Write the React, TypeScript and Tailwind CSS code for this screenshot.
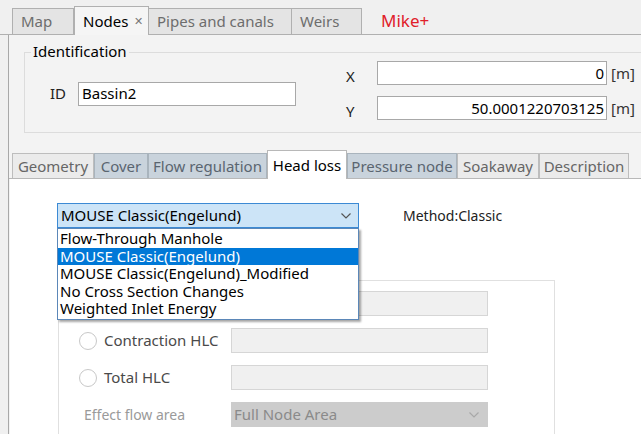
import React from 'react';

const font = { fontFamily: '"Segoe UI", "Noto Sans", "Open Sans", sans-serif' };

const TopTab: React.FC<{ label: string; active?: boolean; close?: boolean; w: string }> = ({ label, active, close, w }) => (
  <div
    className={
      active
        ? `${w} h-[29px] -mb-px flex items-center pl-[8px] bg-[#f5f5f5] border border-b-0 border-[#b0b0b0] text-black`
        : `${w} h-[26px] flex items-center pl-[8px] bg-[#e4e4e4] border border-b-0 border-l-0 first:border-l border-[#b0b0b0] text-[#6d6d6d]`
    }
  >
    <span>{label}</span>
    {close && <span className="ml-auto mr-[5px] text-[11px] text-[#777]">✕</span>}
  </div>
);

const SubTab: React.FC<{ label: string; tone: 'light' | 'blue' | 'active'; w: string }> = ({ label, tone, w }) => {
  const cls =
    tone === 'active'
      ? 'h-[29px] -mb-px bg-white text-black border-[#b8b8b8] border-b-0'
      : tone === 'blue'
      ? 'h-[25px] bg-[#c9d3dc] text-[#5a6570] border-[#a9b4bd]'
      : 'h-[25px] bg-[#ebebeb] text-[#666] border-[#bdbdbd]';
  return (
    <div className={`${w} ${cls} border border-b-0 flex items-center justify-center`}>
      {label}
    </div>
  );
};

const Radio: React.FC<{ label: string }> = ({ label }) => (
  <div className="flex items-center gap-[7px] w-[152px]">
    <span className="w-[18px] h-[18px] rounded-full border border-[#c8c8c8] bg-white" />
    {label && <span className="text-[#4a4a4a]">{label}</span>}
  </div>
);

export default function App() {
  return (
    <div className="w-[641px] h-[434px] overflow-hidden bg-[#f0f0f0] text-[15px] relative" style={font}>
      {/* top tab strip */}
      <div className="h-[35px] flex items-end pl-[12px] border-b border-[#b0b0b0]">
        <TopTab label="Map" w="w-[62px]" />
        <TopTab label="Nodes" active close w="w-[75px]" />
        <TopTab label="Pipes and canals" w="w-[143px]" />
        <TopTab label="Weirs" w="w-[70px]" />
        <span className="ml-[19px] mb-[1px] text-[#e0202a] text-[17px]">Mike+</span>
      </div>

      {/* main panel */}
      <div className="ml-[8px] h-[399px] border-l border-[#a8a8a8] bg-[#f3f3f3] flex flex-col">
        {/* identification group */}
        <div className="shrink-0 mt-[17px] ml-[15px] w-[640px] h-[81px] border border-[#dcdcdc] relative">
          <span className="absolute -top-[12px] left-[6px] px-[2px] bg-[#f3f3f3] text-black leading-[20px]">Identification</span>
          <div className="flex h-full">
            <div className="flex items-center pl-[25px] pt-[2px]">
              <span className="w-[28px] text-[#222]">ID</span>
              <div className="w-[218px] h-[24px] border border-[#a8a8a8] bg-white flex items-center pl-[3px] text-black">Bassin2</div>
            </div>
            <div className="ml-[50px] flex flex-col pt-[8px] gap-[11px]">
              <div className="flex items-center h-[24px]">
                <span className="w-[31px] mt-[6px] text-[#222]">X</span>
                <div className="w-[230px] h-[24px] border border-[#a8a8a8] bg-white flex items-center justify-end pr-[2px] text-black">0</div>
                <span className="ml-[4px] text-[#333]">[m]</span>
              </div>
              <div className="flex items-center h-[24px]">
                <span className="w-[31px] mt-[6px] text-[#222]">Y</span>
                <div className="w-[230px] h-[24px] border border-[#a8a8a8] bg-white flex items-center justify-end pr-[2px] text-black">50.0001220703125</div>
                <span className="ml-[4px] text-[#333]">[m]</span>
              </div>
            </div>
          </div>
        </div>

        {/* sub tabs */}
        <div className="shrink-0 mt-[20px] flex items-end pl-[3px] border-b border-[#b8b8b8] h-[26px]">
          <SubTab label="Geometry" tone="light" w="w-[82px]" />
          <SubTab label="Cover" tone="blue" w="w-[54px]" />
          <SubTab label="Flow regulation" tone="blue" w="w-[119px]" />
          <SubTab label="Head loss" tone="active" w="w-[80px]" />
          <SubTab label="Pressure node" tone="blue" w="w-[110px]" />
          <SubTab label="Soakaway" tone="light" w="w-[82px]" />
          <SubTab label="Description" tone="light" w="w-[90px]" />
        </div>

        {/* tab content */}
        <div className="flex-1 min-h-0 overflow-hidden bg-white ml-[1px] relative">
          <div className="flex items-center mt-[24px] ml-[47px]">
            <div className="w-[302px] h-[25px] bg-[#cce4f7] border border-[#3c8ad4] flex items-center justify-between pl-[3px] pr-[6px] text-black">
              <span>MOUSE Classic(Engelund)</span>
              <svg width="12" height="8" viewBox="0 0 12 8" fill="none" stroke="#555" strokeWidth="1.2">
                <path d="M1.5 1.5 L6 6 L10.5 1.5" />
              </svg>
            </div>
            <span className="ml-[44px] text-[#222] text-[14px]">Method:Classic</span>
          </div>

          {/* dropdown list */}
          <div className="absolute left-[47px] top-[49px] w-[302px] bg-white border border-[#5b87b8] shadow-[2px_2px_2px_rgba(0,0,0,0.35)] z-10 text-black leading-[17.5px] py-[1px]">
            <div className="pl-[2px]">Flow-Through Manhole</div>
            <div className="pl-[2px] bg-[#0078d7] text-white">MOUSE Classic(Engelund)</div>
            <div className="pl-[2px]">MOUSE Classic(Engelund)_Modified</div>
            <div className="pl-[2px]">No Cross Section Changes</div>
            <div className="pl-[2px]">Weighted Inlet Energy</div>
          </div>

          {/* coefficient group */}
          <div className="mt-[52px] ml-[48px] w-[497px] h-[200px] border border-[#e0e0e0] pl-[20px] pt-[10px] flex flex-col gap-[12px]">
            <div className="flex items-center h-[25px]">
              <Radio label="" />
              <div className="w-[257px] h-[25px] bg-[#f0f0f0] border border-[#d6d6d6]" />
            </div>
            <div className="flex items-center h-[25px]">
              <Radio label="Contraction HLC" />
              <div className="w-[257px] h-[25px] bg-[#f0f0f0] border border-[#d6d6d6]" />
            </div>
            <div className="flex items-center h-[25px]">
              <Radio label="Total HLC" />
              <div className="w-[257px] h-[25px] bg-[#f0f0f0] border border-[#d6d6d6]" />
            </div>
            <div className="flex items-center h-[25px]">
              <span className="w-[152px] pl-[5px] text-[#9a9a9a] text-[14px]">Effect flow area</span>
              <div className="w-[257px] h-[25px] bg-[#cccccc] flex items-center justify-between pl-[3px] pr-[8px] text-[#8a8a8a]">
                <span>Full Node Area</span>
                <svg width="12" height="8" viewBox="0 0 12 8" fill="none" stroke="#a8a8a8" strokeWidth="1.2">
                  <path d="M1.5 1.5 L6 6 L10.5 1.5" />
                </svg>
              </div>
            </div>
          </div>
        </div>
      </div>
    </div>
  );
}
